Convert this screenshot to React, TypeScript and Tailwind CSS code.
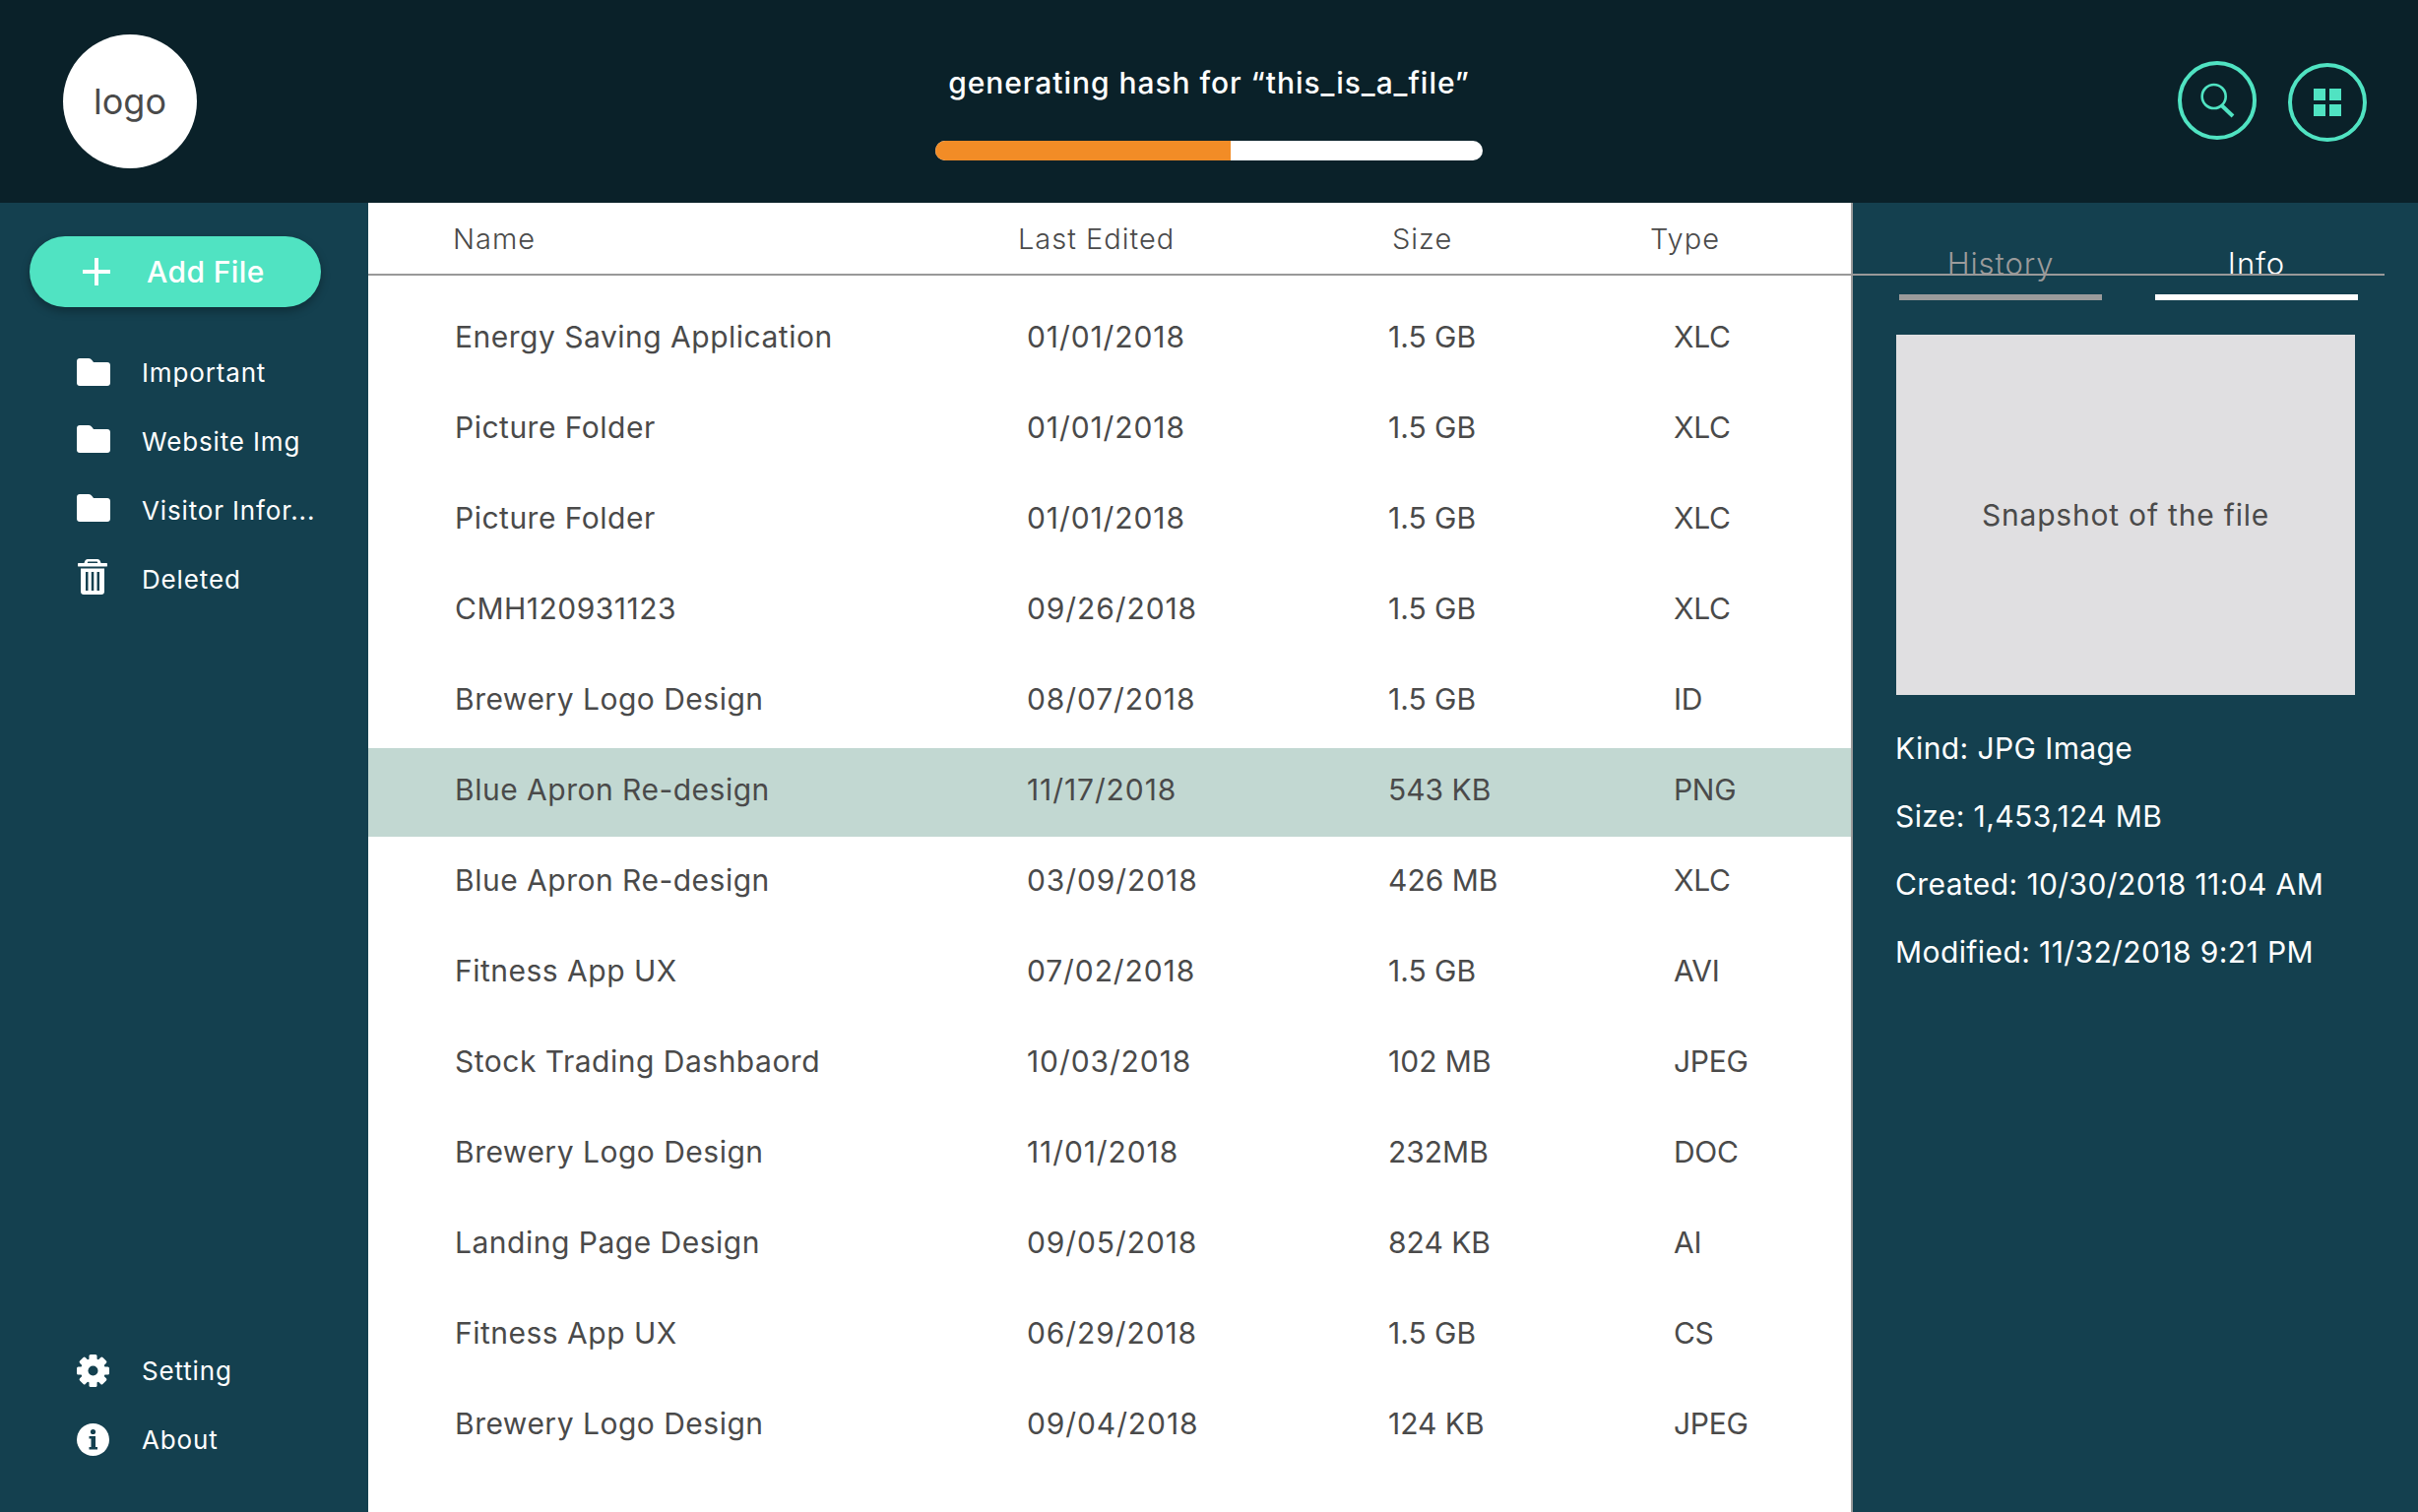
import React from "react";

const files = [
  ["Energy Saving Application", "01/01/2018", "1.5 GB", "XLC"],
  ["Picture Folder", "01/01/2018", "1.5 GB", "XLC"],
  ["Picture Folder", "01/01/2018", "1.5 GB", "XLC"],
  ["CMH120931123", "09/26/2018", "1.5 GB", "XLC"],
  ["Brewery Logo Design", "08/07/2018", "1.5 GB", "ID"],
  ["Blue Apron Re-design", "11/17/2018", "543 KB", "PNG"],
  ["Blue Apron Re-design", "03/09/2018", "426 MB", "XLC"],
  ["Fitness App UX", "07/02/2018", "1.5 GB", "AVI"],
  ["Stock Trading Dashbaord", "10/03/2018", "102 MB", "JPEG"],
  ["Brewery Logo Design", "11/01/2018", "232MB", "DOC"],
  ["Landing Page Design", "09/05/2018", "824 KB", "AI"],
  ["Fitness App UX", "06/29/2018", "1.5 GB", "CS"],
  ["Brewery Logo Design", "09/04/2018", "124 KB", "JPEG"],
];

function Folder() {
  return (
    <svg width="34" height="28" viewBox="0 0 34 28" fill="#fff">
      <path d="M3 0h9c1.500 0 2.500.7 3.500 2l1.500 2h14c1.700 0 3 1.300 3 3v18c0 1.700-1.300 3-3 3H3c-1.700 0-3-1.300-3-3V3c0-1.700 1.300-3 3-3z" />
    </svg>
  );
}

function Trash() {
  return (
    <svg width="30" height="36" viewBox="0 0 30 36" fill="#fff">
      <path d="M10 0h10c1.500 0 2.500 1 3 2.500l.5 1.500H29c.6 0 1 .4 1 1v2c0 .3-.2.500-.5.500H.5C.2 7.500 0 7.300 0 7V5c0-.6.4-1 1-1h5.500L7 2.500C7.500 1 8.500 0 10 0zm.3 2.500L9.700 4h10.600l-.6-1.500z" />
      <path fillRule="evenodd" d="M3 9.500h24V33c0 1.700-1.300 3-3 3H6c-1.700 0-3-1.300-3-3zM8 13v19h2.500V13zm5.800 0v19h2.500V13zm5.700 0v19H22V13z" />
    </svg>
  );
}

function Gear() {
  return (
    <svg width="33" height="33" viewBox="0 0 33 33">
      <g fill="#fff">
        <circle cx="16.500" cy="16.500" r="12.500" />
        <rect x="12.500" y="0" width="8" height="33" rx="1.500" />
        <rect x="12.500" y="0" width="8" height="33" rx="1.500" transform="rotate(45 16.500 16.500)" />
        <rect x="12.500" y="0" width="8" height="33" rx="1.500" transform="rotate(90 16.500 16.500)" />
        <rect x="12.500" y="0" width="8" height="33" rx="1.500" transform="rotate(135 16.500 16.500)" />
      </g>
      <circle cx="16.500" cy="16.500" r="5" fill="#14404f" />
    </svg>
  );
}

function Info() {
  return (
    <svg width="33" height="33" viewBox="0 0 33 33">
      <circle cx="16.500" cy="16.500" r="16.500" fill="#fff" />
      <circle cx="16.500" cy="8.500" r="2.600" fill="#14404f" />
      <path d="M12.500 13h6.500v11h2v2.500h-8.500V24h2v-8.500h-2z" fill="#14404f" />
    </svg>
  );
}

function NavItem({ icon, label, raised = false }: { icon: React.ReactNode; label: string; raised?: boolean }) {
  return (
    <div className="flex h-[70px] items-center">
      <div className={`flex w-[66px] justify-start ${raised ? "-mt-[4px]" : ""}`}>{icon}</div>
      <span className="pt-[2px] text-[26px] leading-none tracking-[0.85px] text-white">{label}</span>
    </div>
  );
}

export default function App() {
  return (
    <div className="flex h-[1536px] w-[2456px] flex-col overflow-hidden bg-[#14404f] font-['Inter',sans-serif]">
      <header className="flex h-[206px] shrink-0 items-center justify-between bg-[#0a2129] pl-[64px] pr-[52px]">
        <div className="flex h-[136px] w-[136px] items-center justify-center rounded-full bg-white text-[36px] text-[#4a4a4a]">
          logo
        </div>
        <div className="ml-[44px] mt-[21px] flex flex-col items-center">
          <div className="text-[30px] font-medium leading-[40px] tracking-[0.95px] text-white">
            generating hash for “this_is_a_file”
          </div>
          <div className="mt-[39px] flex h-[20px] w-[556px] overflow-hidden rounded-full bg-white">
            <div className="h-full w-[300px] bg-[#f28c26]" />
          </div>
        </div>
        <div className="flex items-start gap-[32px]">
          <div className="flex h-[80px] w-[80px] items-center justify-center rounded-full border-[4px] border-[#50e3c2]">
            <svg width="36" height="36" viewBox="0 0 36 36" fill="none" stroke="#50e3c2">
              <circle cx="14.700" cy="14" r="12" strokeWidth="2.600" />
              <path d="M22.700 23.300 L34 34" strokeWidth="4" />
            </svg>
          </div>
          <div className="mt-[2px] flex h-[80px] w-[80px] items-center justify-center rounded-full border-[4px] border-[#50e3c2]">
            <div className="grid grid-cols-2 gap-[4px]">
              <div className="h-[12px] w-[12px] bg-[#50e3c2]" />
              <div className="h-[12px] w-[12px] bg-[#50e3c2]" />
              <div className="h-[12px] w-[12px] bg-[#50e3c2]" />
              <div className="h-[12px] w-[12px] bg-[#50e3c2]" />
            </div>
          </div>
        </div>
      </header>

      <div className="flex min-h-0 flex-1">
        <aside className="flex w-[374px] shrink-0 flex-col pb-[39px] pt-[34px]">
          <div className="ml-[30px] flex h-[72px] w-[296px] items-center rounded-full bg-[#50e3c2] pl-[54px] shadow-[0_4px_10px_rgba(0,0,0,0.3)]">
            <svg width="28" height="28" viewBox="0 0 28 28" stroke="#fff" strokeWidth="4">
              <path d="M14 0v28M0 14h28" />
            </svg>
            <span className="ml-[37px] text-[30px] font-medium leading-none tracking-[0.4px] text-white">Add File</span>
          </div>
          <nav className="ml-[78px] mt-[31px] flex flex-col">
            <NavItem icon={<Folder />} label="Important" />
            <NavItem icon={<Folder />} label="Website Img" raised />
            <NavItem icon={<Folder />} label="Visitor Infor..." raised />
            <NavItem icon={<div className="ml-px"><Trash /></div>} label="Deleted" raised />
          </nav>
          <div className="ml-[78px] mt-auto flex flex-col">
            <NavItem icon={<Gear />} label="Setting" />
            <NavItem icon={<Info />} label="About" />
          </div>
        </aside>

        <main className="w-[1506px] shrink-0 bg-white">
          <div className="grid h-[74px] grid-cols-[574px_380px_262px_1fr] items-center border-b-2 border-[#999] pl-[86px] pt-[2px] text-[29px] font-light tracking-[1px] text-[#4a4a4a]">
            <span>Name</span>
            <span>Last Edited</span>
            <span>Size</span>
            <span>Type</span>
          </div>
          <div className="pt-[16px]">
            {files.map((f, i) => (
              <div
                key={i}
                className={`grid grid-cols-[581px_367px_290px_1fr] items-center pl-[88px] text-[30px] text-[#4a4a4a] ${i === 5 ? "-mb-[2px] mt-[4px] h-[90px] bg-[#c2d8d2] pb-[6px]" : "h-[92px]"}`}
              >
                <span className="tracking-[0.5px]">{f[0]}</span>
                <span className="tracking-[0.9px]">{f[1]}</span>
                <span>{f[2]}</span>
                <span className="tracking-[-0.3px]">{f[3]}</span>
              </div>
            ))}
          </div>
        </main>

        <aside className="relative flex-1 border-l-2 border-[#999] pl-[44px]">
          <div className="absolute left-0 top-[72px] h-[2px] w-[540px] bg-[#999]" />
          <div className="-ml-[24px] flex h-[99px] items-end text-[31px] leading-none tracking-[0.9px]">
            <div className="flex w-[260px] flex-col items-center text-[#9b9b9b]">
              <span className="font-light">History</span>
              <div className="mt-[16px] h-[6px] w-[206px] bg-[#9b9b9b]" />
            </div>
            <div className="flex w-[260px] flex-col items-center text-white">
              <span className="font-light">Info</span>
              <div className="mt-[16px] h-[6px] w-[206px] bg-white" />
            </div>
          </div>
          <div className="mt-[35px] flex h-[366px] w-[466px] items-center justify-center bg-[#e0dfe1] text-[30px] tracking-[0.8px] text-[#4a4a4a]">
            Snapshot of the file
          </div>
          <div className="-ml-[1px] mt-[34px] flex flex-col gap-[29px] text-[30px] leading-[40px] tracking-[0.4px] text-white">
            <div>Kind: JPG Image</div>
            <div>Size: 1,453,124 MB</div>
            <div>Created: 10/30/2018 11:04 AM</div>
            <div>Modified: 11/32/2018 9:21 PM</div>
          </div>
        </aside>
      </div>
    </div>
  );
}
